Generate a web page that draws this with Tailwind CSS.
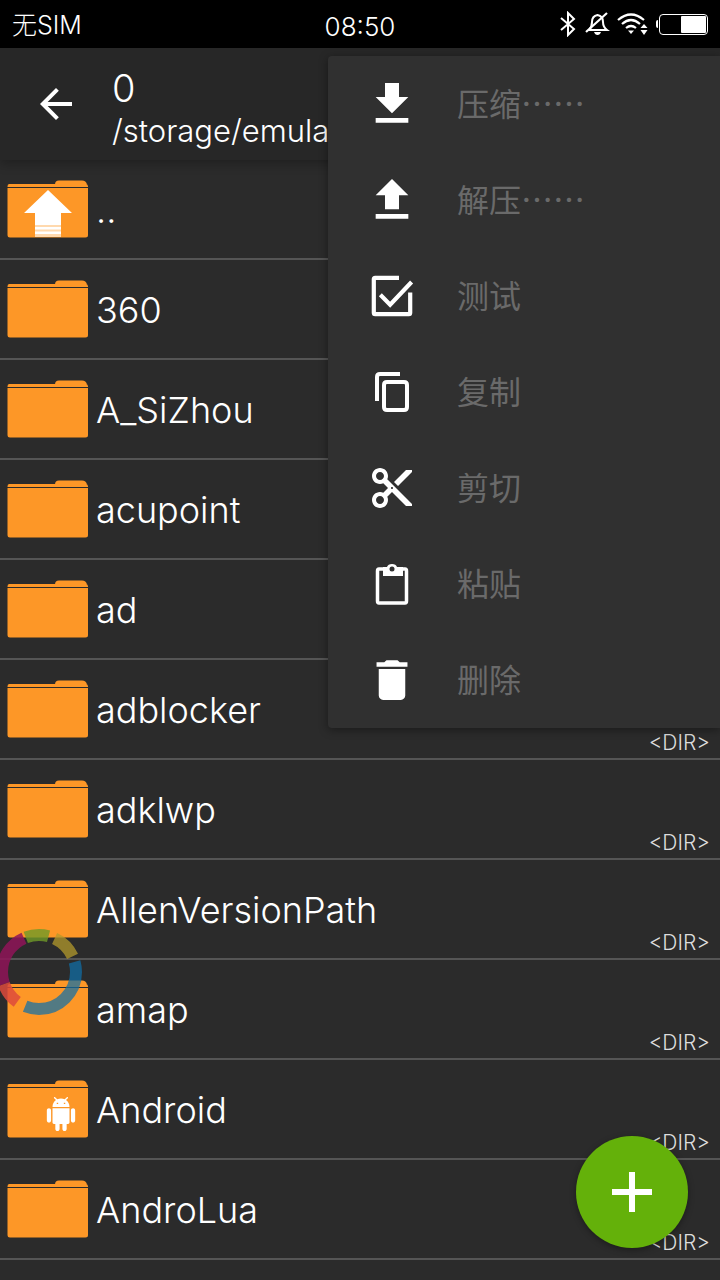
<!DOCTYPE html>
<html lang="zh-CN">
<head>
  <meta charset="UTF-8" />
  <meta name="viewport" content="width=device-width, initial-scale=1.0" />
  <title>文件管理</title>
  <script src="https://cdn.jsdelivr.net/npm/@tailwindcss/browser@4"></script>
</head>
<body class="bg-[#2b2b2b] font-['Inter','Noto_Sans_CJK_SC',sans-serif] text-white">
  <svg class="hidden">
    <symbol id="folder" viewBox="0 0 82 58">
      <path d="M48 4.500 Q48 0.500 52 0.500 H75 Q79 0.500 80 4.500 Z" fill="#fd9727"/>
      <path d="M2 4 H79 Q81 4 81 6.500 V7 H0.500 V6.500 Q0.500 4 2 4 Z" fill="#fd9727"/>
      <path d="M0.500 8 H81 V55 Q81 57.500 78.500 57.500 H3 Q0.500 57.500 0.500 55 Z" fill="#fd9727"/>
    </symbol>
  </svg>

  <div class="relative w-[720px] h-[1280px] overflow-hidden">
    <!-- status bar -->
    <div class="grid grid-cols-3 items-center h-12 bg-black pl-3 pr-3 font-light leading-none">
      <span class="text-[25px] mt-[3px]">无SIM</span>
      <span class="text-center text-[26px] mt-[5px]">08:50</span>
      <div class="flex items-center justify-end gap-[9px]">
        <svg class="w-[20px] h-[26px] -mr-[3px]" viewBox="0 0 20 26" fill="none" stroke="white" stroke-width="2"><path d="M3 7 L16 18 L10 24 V2 L16 8 L3 19"/></svg>
        <svg class="w-[26px] h-[24px] -mr-[2px]" viewBox="0 0 26 24" fill="white"><path d="M5 18 Q8 15 8 10 Q8 4 13.500 3 Q19 4 19 10 Q19 15 23 18 Z" fill="none" stroke="white" stroke-width="2"/><path d="M10 20 H17 Q16 23 13.500 23 Q11 23 10 20Z"/><path d="M2 20 L23 1" stroke="white" stroke-width="2.200"/></svg>
        <svg class="w-[32px] h-[24px]" viewBox="0 0 32 24" fill="none" stroke="white" stroke-width="2.200"><path d="M1 8 Q14 -3 27 8"/><path d="M5 12 Q14 4 23 12"/><path d="M9 16 Q14 12 19 16"/><path d="M11 18.500 L14 22 L17 18.500 Z" fill="white" stroke="none"/><path d="M27 12 L30.500 16 H23.500Z M27 23 L30.500 18 H23.500Z" fill="white" stroke="none"/></svg>
        <div class="flex items-center -ml-[2px]">
          <div class="w-[2px] h-[8px] bg-white rounded-l-sm mr-[1px]"></div>
          <div class="w-[49px] h-[21px] border-[1.500px] border-white rounded-[4px] p-[1px] flex justify-end">
            <div class="w-[25px] bg-white rounded-[1px]"></div>
          </div>
        </div>
      </div>
    </div>

    <!-- toolbar -->
    <div class="flex items-center h-[112px] bg-[#272727] shadow-[0_4px_10px_rgba(0,0,0,0.25)] relative">
      <svg class="w-[48px] h-[48px] ml-8" viewBox="0 0 24 24" fill="white"><path d="M20 11H7.830l5.590-5.590L12 4l-8 8 8 8 1.410-1.410L7.830 13H20v-2z"/></svg>
      <div class="ml-[32px] mt-[10px] font-light whitespace-nowrap">
        <div class="text-[38px] leading-[44px]">0</div>
        <div class="text-[31px] leading-[42px]">/storage/emulated/0</div>
      </div>
    </div>

    <!-- list -->
    <div class="font-light">
      <div class="flex items-center h-[100px] pl-[7px] border-b-2 border-[#555]">
        <div class="relative w-[82px] h-[58px]">
          <svg class="w-[82px] h-[58px]"><use href="#folder"/></svg>
          <svg class="absolute left-0 top-0 w-[82px] h-[58px]" viewBox="0 0 82 58"><path d="M41 10 L65 33 H54 V57 H28 V33 H17 Z" fill="white"/><path d="M28 45 H54 V47 H28Z M28 49.500 H54 V51.500 H28Z M28 54 H54 V57 H28Z" fill="#ffd9ae"/></svg>
        </div>
        <span class="ml-[7px] mt-[2px] text-[36px]">..</span>
      </div>
      <div class="flex items-center h-[100px] pl-[7px] border-b-2 border-[#555]">
        <svg class="w-[82px] h-[58px]"><use href="#folder"/></svg>
        <span class="ml-[7px] mt-[2px] text-[36px]">360</span>
        <span class="ml-auto self-end mr-[10px] text-[21px] text-[#ddd]">&lt;DIR&gt;</span>
      </div>
      <div class="flex items-center h-[100px] pl-[7px] border-b-2 border-[#555]">
        <svg class="w-[82px] h-[58px]"><use href="#folder"/></svg>
        <span class="ml-[7px] mt-[2px] text-[36px]">A_SiZhou</span>
        <span class="ml-auto self-end mr-[10px] text-[21px] text-[#ddd]">&lt;DIR&gt;</span>
      </div>
      <div class="flex items-center h-[100px] pl-[7px] border-b-2 border-[#555]">
        <svg class="w-[82px] h-[58px]"><use href="#folder"/></svg>
        <span class="ml-[7px] mt-[2px] text-[36px]">acupoint</span>
        <span class="ml-auto self-end mr-[10px] text-[21px] text-[#ddd]">&lt;DIR&gt;</span>
      </div>
      <div class="flex items-center h-[100px] pl-[7px] border-b-2 border-[#555]">
        <svg class="w-[82px] h-[58px]"><use href="#folder"/></svg>
        <span class="ml-[7px] mt-[2px] text-[36px]">ad</span>
        <span class="ml-auto self-end mr-[10px] text-[21px] text-[#ddd]">&lt;DIR&gt;</span>
      </div>
      <div class="flex items-center h-[100px] pl-[7px] border-b-2 border-[#555]">
        <svg class="w-[82px] h-[58px]"><use href="#folder"/></svg>
        <span class="ml-[7px] mt-[2px] text-[36px]">adblocker</span>
        <span class="ml-auto self-end mr-[10px] text-[21px] text-[#ddd]">&lt;DIR&gt;</span>
      </div>
      <div class="flex items-center h-[100px] pl-[7px] border-b-2 border-[#555]">
        <svg class="w-[82px] h-[58px]"><use href="#folder"/></svg>
        <span class="ml-[7px] mt-[2px] text-[36px]">adklwp</span>
        <span class="ml-auto self-end mr-[10px] text-[21px] text-[#ddd]">&lt;DIR&gt;</span>
      </div>
      <div class="flex items-center h-[100px] pl-[7px] border-b-2 border-[#555]">
        <svg class="w-[82px] h-[58px]"><use href="#folder"/></svg>
        <span class="ml-[7px] mt-[2px] text-[36px]">AllenVersionPath</span>
        <span class="ml-auto self-end mr-[10px] text-[21px] text-[#ddd]">&lt;DIR&gt;</span>
      </div>
      <div class="flex items-center h-[100px] pl-[7px] border-b-2 border-[#555]">
        <svg class="w-[82px] h-[58px]"><use href="#folder"/></svg>
        <span class="ml-[7px] mt-[2px] text-[36px]">amap</span>
        <span class="ml-auto self-end mr-[10px] text-[21px] text-[#ddd]">&lt;DIR&gt;</span>
      </div>
      <div class="flex items-center h-[100px] pl-[7px] border-b-2 border-[#555]">
        <div class="relative w-[82px] h-[58px]">
          <svg class="w-[82px] h-[58px]"><use href="#folder"/></svg>
          <svg class="absolute left-[37px] top-[17px] w-[34px] h-[34px]" viewBox="0 0 24 24" fill="white"><path d="M6 18c0 .55.45 1 1 1h1v3.500c0 .83.67 1.500 1.500 1.500s1.500-.67 1.500-1.500V19h2v3.500c0 .83.67 1.500 1.500 1.500s1.500-.67 1.500-1.500V19h1c.55 0 1-.45 1-1V8H6v10zM3.500 8C2.670 8 2 8.670 2 9.500v7c0 .83.67 1.500 1.500 1.500S5 17.330 5 16.500v-7C5 8.670 4.330 8 3.500 8zm17 0c-.83 0-1.500.67-1.500 1.500v7c0 .83.67 1.500 1.500 1.500s1.500-.67 1.500-1.500v-7c0-.83-.67-1.500-1.500-1.500zm-4.970-5.840l1.300-1.300c.2-.2.2-.51 0-.71-.2-.2-.51-.2-.71 0l-1.480 1.480C13.850 1.230 12.950 1 12 1c-.96 0-1.860.23-2.660.63L7.850.15c-.2-.2-.51-.2-.71 0-.2.2-.2.51 0 .71l1.310 1.310C6.970 3.260 6 5.010 6 7h12c0-1.990-.97-3.750-2.470-4.840zM10 5H9V4h1v1zm5 0h-1V4h1v1z"/></svg>
        </div>
        <span class="ml-[7px] mt-[2px] text-[36px]">Android</span>
        <span class="ml-auto self-end mr-[10px] text-[21px] text-[#ddd]">&lt;DIR&gt;</span>
      </div>
      <div class="flex items-center h-[100px] pl-[7px] border-b-2 border-[#555]">
        <svg class="w-[82px] h-[58px]"><use href="#folder"/></svg>
        <span class="ml-[7px] mt-[2px] text-[36px]">AndroLua</span>
        <span class="ml-auto self-end mr-[10px] text-[21px] text-[#ddd]">&lt;DIR&gt;</span>
      </div>
    </div>

    <!-- loading ring -->
    <svg class="absolute left-[-6px] top-[927px] w-[90px] h-[90px] -rotate-90" viewBox="0 0 90 90" fill="none" stroke-width="12">
      <circle cx="45" cy="45" r="37" pathLength="360" stroke="#6f9a28" stroke-opacity="0.8" stroke-dasharray="36 324" stroke-dashoffset="-339"/>
      <circle cx="45" cy="45" r="37" pathLength="360" stroke="#b39a2c" stroke-opacity="0.75" stroke-dasharray="40 320" stroke-dashoffset="-25"/>
      <circle cx="45" cy="45" r="37" pathLength="360" stroke="#0f6fa8" stroke-opacity="0.72" stroke-dasharray="128 232" stroke-dashoffset="-74"/>
      <circle cx="45" cy="45" r="37" pathLength="360" stroke="#8f1458" stroke-opacity="0.85" stroke-dasharray="85 275" stroke-dashoffset="-251"/>
      <circle cx="45" cy="45" r="37" pathLength="360" stroke="#dd4a3c" stroke-opacity="0.85" stroke-dasharray="35 325" stroke-dashoffset="-216"/>
    </svg>

    <!-- popup menu -->
    <div class="absolute left-[328px] top-14 w-[392px] bg-[#303030] rounded-tl-[4px] rounded-bl-[4px] shadow-[0_2px_10px_rgba(0,0,0,0.4)] font-['Noto_Sans_CJK_SC',sans-serif] text-[32px] leading-none text-[#6a6a6a]">
      <div class="flex items-center h-24 pl-9">
        <svg class="w-14 h-14" viewBox="0 0 24 24" fill="white"><path d="M19 9h-4V3H9v6H5l7 7 7-7zM5 18v2h14v-2H5z"/></svg>
        <span class="ml-[37px] mb-[5px]">压缩……</span>
      </div>
      <div class="flex items-center h-24 pl-9">
        <svg class="w-14 h-14" viewBox="0 0 24 24" fill="white"><path d="M9 16h6v-6h4l-7-7-7 7h4zm-4 2h14v2H5z"/></svg>
        <span class="ml-[37px] mb-[5px]">解压……</span>
      </div>
      <div class="flex items-center h-24 pl-9">
        <svg class="w-14 h-14" viewBox="0 0 24 24" fill="none" stroke="white" stroke-width="1.800"><path d="M15 4.200 H4.800 Q4.200 4.200 4.200 4.800 V19.200 Q4.200 19.800 4.800 19.800 H19.200 Q19.800 19.800 19.800 19.200 V10.500"/><path d="M7 11.500 L11.200 15.700 L20.400 6"/></svg>
        <span class="ml-[37px] mb-[5px]">测试</span>
      </div>
      <div class="flex items-center h-24 pl-9">
        <svg class="w-14 h-14" viewBox="0 0 56 56" fill="none" stroke="white" stroke-width="4"><path d="M36 10 H16 Q13 10 13 13 V37"/><path d="M23 18 H40 Q43 18 43 21 V43 Q43 46 40 46 H23 Q20 46 20 43 V21 Q20 18 23 18 Z"/></svg>
        <span class="ml-[37px] mb-[5px]">复制</span>
      </div>
      <div class="flex items-center h-24 pl-9">
        <svg class="w-14 h-14 p-1" viewBox="0 0 24 24" fill="white"><path d="M9.640 7.640c.23-.5.36-1.050.36-1.640 0-2.210-1.790-4-4-4S2 3.790 2 6s1.790 4 4 4c.59 0 1.140-.13 1.640-.36L10 12l-2.360 2.360C7.140 14.130 6.590 14 6 14c-2.210 0-4 1.790-4 4s1.790 4 4 4 4-1.790 4-4c0-.59-.13-1.140-.36-1.640L12 14l7 7h3v-1L9.640 7.640zM6 8c-1.100 0-2-.89-2-2s.9-2 2-2 2 .89 2 2-.9 2-2 2zm0 12c-1.100 0-2-.89-2-2s.9-2 2-2 2 .89 2 2-.9 2-2 2zm6-7.500c-.28 0-.5-.22-.5-.5s.22-.5.5-.5.5.22.5.5-.22.5-.5.5zM19 3l-6 6 2 2 7-7V3z"/></svg>
        <span class="ml-[37px] mb-[5px]">剪切</span>
      </div>
      <div class="flex items-center h-24 pl-9">
        <svg class="w-14 h-14" viewBox="0 0 56 56" fill="none" stroke="white" stroke-width="3.500"><path d="M19 13 H15 Q13.500 13 13.500 15 V45 Q13.500 47 15 47 H41 Q42.500 47 42.500 45 V15 Q42.500 13 41 13 H37"/><path d="M19 11 H23 Q24 8 28 8 Q32 8 33 11 H39 V20 H19 Z" fill="white" stroke="none"/><circle cx="28" cy="13" r="2.500" fill="#303030" stroke="none"/></svg>
        <span class="ml-[37px] mb-[5px]">粘贴</span>
      </div>
      <div class="flex items-center h-24 pl-9">
        <svg class="w-14 h-14 p-[1.500px]" viewBox="0 0 24 24" fill="white"><path d="M6 19c0 1.100.9 2 2 2h8c1.100 0 2-.9 2-2V7H6v12zM19 4h-3.500l-1-1h-5l-1 1H5v2h14V4z"/></svg>
        <span class="ml-[37px] mb-[5px]">删除</span>
      </div>
    </div>

    <!-- add button -->
    <div class="absolute left-[576px] top-[1136px] flex items-center justify-center w-[112px] h-[112px] rounded-full bg-[#64b10a] shadow-[0_2px_6px_rgba(0,0,0,0.35)]">
      <svg class="w-[40px] h-[40px]" viewBox="0 0 40 40" fill="white"><path d="M17 0 H23 V17 H40 V23 H23 V40 H17 V23 H0 V17 H17 Z"/></svg>
    </div>
  </div>
</body>
</html>
